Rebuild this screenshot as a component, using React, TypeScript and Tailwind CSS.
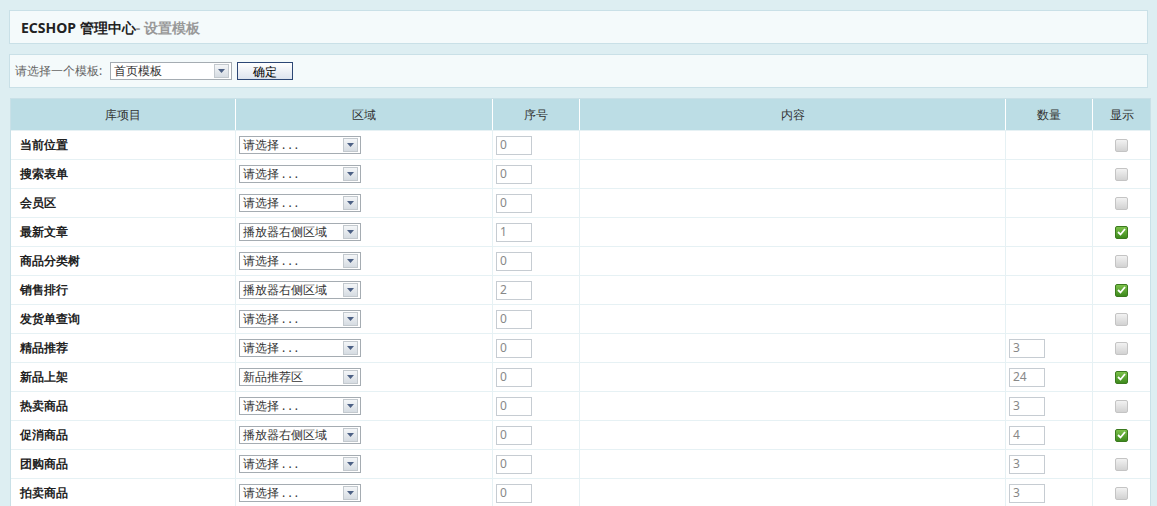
import React from 'react';

const ROWS: [string, string, string, string, boolean][] = [
  ['当前位置', '请选择...', '0', '', false],
  ['搜索表单', '请选择...', '0', '', false],
  ['会员区', '请选择...', '0', '', false],
  ['最新文章', '播放器右侧区域', '1', '', true],
  ['商品分类树', '请选择...', '0', '', false],
  ['销售排行', '播放器右侧区域', '2', '', true],
  ['发货单查询', '请选择...', '0', '', false],
  ['精品推荐', '请选择...', '0', '3', false],
  ['新品上架', '新品推荐区', '0', '24', true],
  ['热卖商品', '请选择...', '0', '3', false],
  ['促消商品', '播放器右侧区域', '0', '4', true],
  ['团购商品', '请选择...', '0', '3', false],
  ['拍卖商品', '请选择...', '0', '3', false],
];

function Select({ value, width }: { value: string; width: string }) {
  return (
    <div className={`flex h-[18px] items-center border border-[#a5acb2] bg-white ${width}`}>
      <span className="flex-1 whitespace-nowrap pl-[3px] text-[12px] leading-none text-[#333]">
        {value === '请选择...' ? '请选择 . . .' : value}
      </span>
      <span className="mr-[2px] flex h-[14px] w-[15px] shrink-0 items-center justify-center border border-[#c3c9ce] bg-gradient-to-b from-[#f4f6f8] to-[#d6dce2]">
        <svg width="7" height="4" viewBox="0 0 7 4"><path d="M0 0h7L3.5 4z" fill="#4d6185" /></svg>
      </span>
    </div>
  );
}

function Num({ v }: { v: string }) {
  return (
    <div className="flex h-[19px] w-[36px] items-center border border-[#c6ccd2] bg-white pl-[3px] text-[12px] text-[#888]">
      {v}
    </div>
  );
}

function Check({ on }: { on: boolean }) {
  return on ? (
    <div className="flex h-[13px] w-[13px] items-center justify-center rounded-[2px] border border-[#3b7a1f] bg-gradient-to-b from-[#7cc14a] to-[#3d8a1c]">
      <svg width="9" height="8" viewBox="0 0 9 8"><path d="M1 4l2.5 2.5L8 1" stroke="#fff" strokeWidth="1.8" fill="none" /></svg>
    </div>
  ) : (
    <div className="h-[13px] w-[13px] rounded-[2px] border border-[#c4c4c4] bg-gradient-to-b from-[#f2f2f2] to-[#d2d2d2]" />
  );
}

export default function App() {
  const cols = 'grid grid-cols-[224px_257px_87px_426px_87px_58px]';
  return (
    <div className="h-[506px] overflow-hidden bg-[#ddeef2] px-[9px] pt-[10px] font-['SimSun','Noto_Sans_CJK_SC',sans-serif] text-[12px]">
      <div className="flex h-[34px] items-center border border-[#c9e0e7] bg-[#f4fafb] pl-[11px] font-['Liberation_Sans','Noto_Sans_CJK_SC',sans-serif] text-[14px] font-bold text-[#222]">
        ECSHOP 管理中心<span className="text-[#999]">- 设置模板</span>
      </div>
      <div className="mt-[10px] flex h-[34px] items-center border border-[#c9e0e7] bg-[#f4fafb] pl-[5px] text-[#666]">
        <span className="mr-[8px]">请选择一个模板:</span>
        <Select value="首页模板" width="w-[122px]" />
        <button className="ml-[5px] h-[18px] w-[56px] border border-[#2c4775] bg-gradient-to-b from-white to-[#dde4ee] text-[12px] text-black">确定</button>
      </div>
      <div className="mt-[10px] ml-[1px] w-[1141px] border border-[#c9e0e7] bg-white">
        <div className={`${cols} h-[31px] bg-[#bcdde5] text-[#333]`}>
          {['库项目', '区域', '序号', '内容', '数量', '显示'].map((h, i) => (
            <div key={h} className={`flex items-center justify-center ${i > 0 ? 'border-l border-white' : ''}`}>{h}</div>
          ))}
        </div>
        {ROWS.map(([name, area, seq, qty, on]) => (
          <div key={name} className={`${cols} h-[29px] border-t border-[#e6f1f4]`}>
            <div className="flex items-center pl-[9px] font-bold text-[#222]">{name}</div>
            <div className="flex items-center border-l border-[#e6f1f4] pl-[3px]"><Select value={area} width="w-[122px]" /></div>
            <div className="flex items-center border-l border-[#e6f1f4] pl-[3px]"><Num v={seq} /></div>
            <div className="border-l border-[#e6f1f4]" />
            <div className="flex items-center border-l border-[#e6f1f4] pl-[3px]">{qty && <Num v={qty} />}</div>
            <div className="flex items-center justify-center border-l border-[#e6f1f4]"><Check on={on} /></div>
          </div>
        ))}
      </div>
    </div>
  );
}
